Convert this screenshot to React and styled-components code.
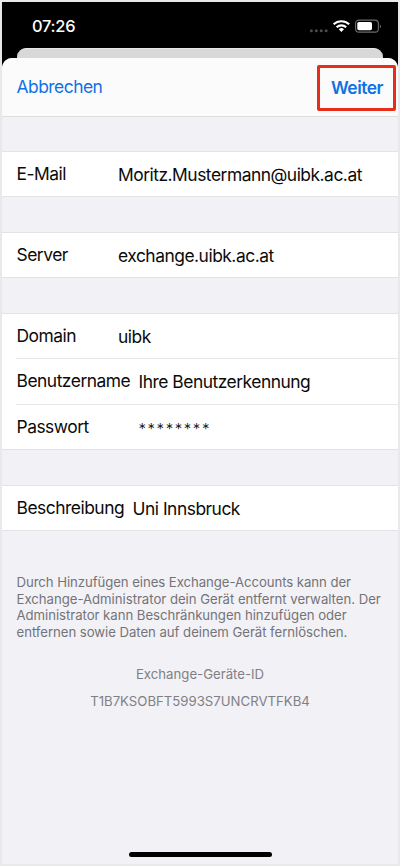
import React from 'react'
import styled, { createGlobalStyle } from 'styled-components'

const GlobalStyle = createGlobalStyle`
  * {
    box-sizing: border-box;
  }

  body {
    margin: 0;
    background: #e9e9ec;
    font-family: Inter, "Liberation Sans", sans-serif;
  }
`

const Phone = styled.div`
  width: 400px;
  height: 866px;
  border: 2px solid #e9e9ec;
  background: #000;
  display: flex;
  flex-direction: column;
  overflow: hidden;
`

const StatusBar = styled.div`
  height: 46px;
  flex: none;
  display: flex;
  align-items: center;
  justify-content: space-between;
  padding: 1px 16px 0 30px;
  color: #fff;
`

const Time = styled.div`
  font-size: 16.4px;
  font-weight: 500;
  letter-spacing: -0.25px;
  white-space: nowrap;
`

const CardBehind = styled.div`
  height: 10px;
  flex: none;
  margin: 0 15px;
  border-radius: 9px 9px 0 0;
  border-top: 1px solid #e8e8e9;
  background: #d8d8d9;
`

const Sheet = styled.div`
  flex: 1;
  display: flex;
  flex-direction: column;
  border-radius: 10px 10px 0 0;
  background: #f2f1f6;
  overflow: hidden;
`

const Header = styled.div`
  height: 59px;
  flex: none;
  display: flex;
  justify-content: space-between;
  align-items: center;
  padding: 0 0 0 14.5px;
  border-bottom: 1px solid #dededf;
  background: #fbfbfb;
`

const HeaderButton = styled.button`
  border: 0;
  padding: 0;
  background: none;
  color: #1071e5;
  font-family: inherit;
  font-size: 17.4px;
  font-weight: ${(props) => (props.$bold ? 600 : 400)};
  letter-spacing: -0.5px;
  line-height: 22px;
`

const Highlight = styled.div`
  width: 79px;
  height: 46px;
  margin-right: 2px;
  margin-top: 1px;
  border: 3px solid #e52d17;
  border-radius: 2px;
  display: flex;
  align-items: center;
  padding-left: 11px;
`

const Group = styled.div`
  flex: none;
  margin-top: ${(props) => props.$gap}px;
  border-top: 1px solid #e3e3e6;
  border-bottom: 1px solid #e3e3e6;
  background: #fff;
`

const Row = styled.div`
  display: flex;
  height: ${(props) => props.$height || 44}px;
  margin-left: 14px;
  padding-left: 0.5px;
  font-size: 17.4px;
  letter-spacing: -0.48px;
  line-height: 22px;
  color: #0b0b0b;
  white-space: nowrap;

  & + & {
    border-top: 1px solid #e6e6e8;
  }
`

const Label = styled.div`
  width: ${(props) => props.$width}px;
  flex: none;
  padding-top: 11px;
`

const Value = styled.div`
  padding-top: 12px;
`

const Secret = styled(Value)`
  padding-top: 13px;
  font-size: 15px;
  font-weight: 300;
  letter-spacing: 1.55px;
`

const Note = styled.p`
  margin: 43px 0 0 14.5px;
  font-size: 13.2px;
  line-height: 16.5px;
  color: #747478;
`

const NoteLine = styled.span`
  display: block;
  white-space: nowrap;
  letter-spacing: ${(props) => props.$spacing}px;
`

const DeviceId = styled.div`
  margin-top: 21px;
  text-align: center;
  font-size: 13.2px;
  line-height: 26.5px;
  color: #808084;
`

const HomeBar = styled.div`
  width: 143px;
  height: 5px;
  margin: auto auto 7px;
  border-radius: 3px;
  background: #000;
`

const groups = [
  {
    gap: 34,
    rows: [{ label: 'E-Mail', value: 'Moritz.Mustermann@uibk.ac.at', width: 101.5 }]
  },
  {
    gap: 35,
    rows: [{ label: 'Server', value: 'exchange.uibk.ac.at', width: 101.5 }]
  },
  {
    gap: 35,
    rows: [
      { label: 'Domain', value: 'uibk', width: 101.5 },
      { label: 'Benutzername', value: 'Ihre Benutzerkennung', width: 122, height: 46 },
      { label: 'Passwort', value: '********', width: 122, height: 45, secret: true }
    ]
  },
  {
    gap: 35,
    rows: [{ label: 'Beschreibung', value: 'Uni Innsbruck', width: 116 }]
  }
]

const noteLines = [
  { text: 'Durch Hinzufügen eines Exchange-Accounts kann der', spacing: -0.07 },
  { text: 'Exchange-Administrator dein Gerät entfernt verwalten. Der', spacing: -0.03 },
  { text: 'Administrator kann Beschränkungen hinzufügen oder', spacing: -0.05 },
  { text: 'entfernen sowie Daten auf deinem Gerät fernlöschen.', spacing: -0.05 }
]

const StatusIcons = () => (
  <svg width="74" height="16" viewBox="0 0 74 16">
    <g fill="#4c4c4c">
      <circle cx="3.4" cy="12.8" r="1.5" />
      <circle cx="8.3" cy="12.8" r="1.5" />
      <circle cx="13.2" cy="12.8" r="1.5" />
      <circle cx="18.1" cy="12.8" r="1.5" />
    </g>
    <g fill="none" stroke="#fff" strokeWidth="2.1">
      <path d="M25.6 6.3a11.3 11.3 0 0 1 15.6 0" />
      <path d="M28.6 9.3a7 7 0 0 1 9.6 0" />
    </g>
    <path d="M33.4 13.9l-2.6-2.7a3.8 3.8 0 0 1 5.2 0z" fill="#fff" />
    <rect x="47.6" y="2.1" width="22.8" height="12" rx="3.4" fill="none" stroke="#6c6c6c" strokeWidth="1.1" />
    <rect x="49.3" y="3.9" width="14.7" height="8.4" rx="1.7" fill="#fff" />
    <path d="M71.9 6.4c1.3.5 1.3 3.3 0 3.8z" fill="#777" />
  </svg>
)

const FormRow = (props) => {
  const Text = props.secret ? Secret : Value
  return (
    <Row $height={props.height}>
      <Label $width={props.width}>{props.label}</Label>
      <Text>{props.value}</Text>
    </Row>
  )
}

const App = () => {
  return (
    <>
      <GlobalStyle />
      <Phone>
        <StatusBar>
          <Time>07:26</Time>
          <StatusIcons />
        </StatusBar>
        <CardBehind />
        <Sheet>
          <Header>
            <HeaderButton>Abbrechen</HeaderButton>
            <Highlight>
              <HeaderButton $bold>Weiter</HeaderButton>
            </Highlight>
          </Header>
          {groups.map((group) => (
            <Group key={group.rows[0].label} $gap={group.gap}>
              {group.rows.map((row) => <FormRow key={row.label} {...row} />)}
            </Group>
          ))}
          <Note>
            {noteLines.map((line) => (
              <NoteLine key={line.text} $spacing={line.spacing}>{line.text}</NoteLine>
            ))}
          </Note>
          <DeviceId>
            <div>Exchange-Geräte-ID</div>
            <div>T1B7KSOBFT5993S7UNCRVTFKB4</div>
          </DeviceId>
          <HomeBar />
        </Sheet>
      </Phone>
    </>
  )
}

export default App
